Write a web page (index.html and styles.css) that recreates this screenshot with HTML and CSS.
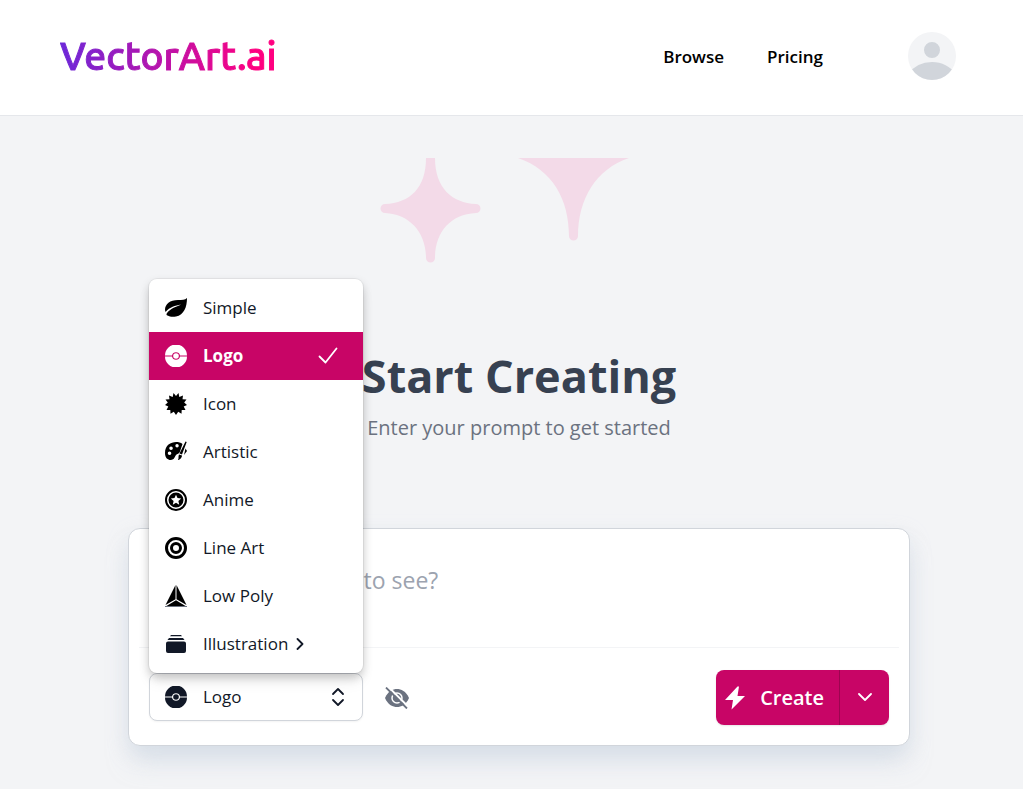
FILE: index.html
```html
<!DOCTYPE html>
<html lang="en">
<head>
    <meta charset="UTF-8">
    <meta name="viewport" content="width=device-width, initial-scale=1.0">
    <title>VectorArt.ai</title>
    <link rel="stylesheet" href="styles.css">
</head>
<body>
    <header class="header">
        <a class="brand" href="#">VectorArt.ai</a>
        <nav class="nav">
            <a href="#">Browse</a>
            <a href="#">Pricing</a>
        </nav>
        <button class="avatar" type="button" aria-label="Account">
            <svg viewBox="0 0 24 24" fill="#d1d5db"><path d="M24 20.993V24H0v-2.996A14.977 14.977 0 0 1 12.004 15c4.904 0 9.26 2.354 11.996 5.993zM16.002 8.999a4 4 0 1 1-8 0 4 4 0 0 1 8 0z"/></svg>
        </button>
    </header>

    <main class="main">
        <svg class="sparkles" viewBox="0 0 278 105" aria-hidden="true">
            <path d="M46 0H55C55 30 72 45 96 46A4.500 4.500 0 0 1 96 55C70 56 55 75 55 100A4.500 4.500 0 0 1 46 100C46 75 30 56 5 55A4.500 4.500 0 0 1 5 46C30 45 46 30 46 0Z"/>
            <path d="M138 0H249C216 11 198 41 198 78A4.500 4.500 0 0 1 189 78C189 42 173 12 138 0Z"/>
        </svg>
        <h1 class="title">Start Creating</h1>
        <p class="subtitle">Enter your prompt to get started</p>

        <form class="card">
            <textarea class="prompt" aria-label="Prompt" placeholder="What do you want to see?"></textarea>
            <div class="toolbar">
                <div class="picker">
                    <svg class="icon picker-icon" viewBox="0 0 22 22"><use href="#logo-icon"/></svg>
                    <select class="picker-select" aria-label="Style">
                        <option>Simple</option>
                        <option selected>Logo</option>
                        <option>Icon</option>
                        <option>Artistic</option>
                        <option>Anime</option>
                        <option>Line Art</option>
                        <option>Low Poly</option>
                        <option>Illustration</option>
                    </select>
                    <svg class="picker-arrows" viewBox="0 0 14 20"><path d="M2 7l5-5 5 5M2 13l5 5 5-5"/></svg>

                    <div class="menu">
                        <button class="menu-item" type="button">
                            <svg class="icon black" viewBox="0 0 22 22"><path d="M22 1c-2 2-5 2-9 2C5 3 0 7 0 13l.5 2C5 10 10 8.500 16 7.500 11 10 6 11 2 16c-1 1.500-.5 2.500.5 2.500C5 20 8 20 11 19.500 19 18 22 10 22 1z"/></svg>
                            Simple
                        </button>
                        <button class="menu-item selected" type="button">
                            <svg class="icon" viewBox="0 0 22 22">
                                <g id="logo-icon"><path d="M0 10.500a11 11 0 0 1 22 0h-7a4.100 4.100 0 0 0-8 0zM0 11.500a11 11 0 0 0 22 0h-7a4.100 4.100 0 0 1-8 0z"/><circle cx="11" cy="11" r="2.800"/></g>
                            </svg>
                            Logo
                            <svg class="check" viewBox="0 0 20 18"><path d="M1.500 9.500l6 6L18.500 1.500"/></svg>
                        </button>
                        <button class="menu-item" type="button">
                            <svg class="icon black" viewBox="0 0 22 22"><path d="M11 3L13.500 0 14.300 3.900 18 2.500 17.500 6.300 21.500 6.500 19.200 9.500 22 12 18.700 13.500 20.500 17 16.700 17 16.500 20.800 13.200 18.700 11 22 8.800 18.700 5.500 20.800 5.300 17 1.500 17 3.300 13.500 0 12 2.800 9.500.5 6.500 4.500 6.300 4 2.500 7.700 3.900 8.500 0z"/></svg>
                            Icon
                        </button>
                        <button class="menu-item" type="button">
                            <svg class="icon black" viewBox="0 0 22 22">
                                <path fill-rule="evenodd" d="M17.500 3C12-1 0 1 0 12c0 5 3 7 5.500 7 4.500 0 4-4 6-5.500 1.500-1 2.500-.5 3.500-3zM4.500 10.500a1.800 1.800 0 1 0 .1 3.600 1.800 1.800 0 0 0-.1-3.600zM6 5.500a1.800 1.800 0 1 0 .1 3.600A1.800 1.800 0 0 0 6 5.500zM12 3a1.700 1.700 0 1 0 .1 3.400A1.700 1.700 0 0 0 12 3z"/>
                                <path d="M20.500.5l1.200.5-4.700 12.500-2.500-1zM14 13.500l3 1c0 2-2 4.500-4 4.500 1-1.500 0-3.500 1-5.500zM20.500 7.500L22 10l-3 4z"/>
                            </svg>
                            Artistic
                        </button>
                        <button class="menu-item" type="button">
                            <svg class="icon black" viewBox="0 0 22 22">
                                <circle cx="11" cy="11" r="10" fill="none" stroke="currentColor" stroke-width="2"/>
                                <path fill-rule="evenodd" d="M11 3.500a7.500 7.500 0 1 0 0 15 7.500 7.500 0 0 0 0-15zm0 2.200l1.500 3.400 3.700.4-2.800 2.500.8 3.700-3.200-1.900-3.200 1.900.8-3.700-2.800-2.500 3.700-.4z"/>
                            </svg>
                            Anime
                        </button>
                        <button class="menu-item" type="button">
                            <svg class="icon black" viewBox="0 0 22 22"><g fill="none" stroke="currentColor" stroke-width="3"><circle cx="11" cy="11" r="9.500"/><circle cx="11" cy="11" r="4.500"/></g></svg>
                            Line Art
                        </button>
                        <button class="menu-item" type="button">
                            <svg class="icon black" viewBox="0 0 22 22"><path d="M10.500 0v14.300L.5 20zM11.500 0v14.300L21.500 20zM11 15.300L20.500 21h-19z"/><path d="M0 21.500h22" stroke="#6b7280"/></svg>
                            Low Poly
                        </button>
                        <button class="menu-item" type="button">
                            <svg class="icon" viewBox="0 0 22 22"><path d="M6 2h10l1 1.300H5zM4 5h14l1.500 2h-17zM3 8.500h16a2 2 0 0 1 2 2V18a2 2 0 0 1-2 2H3a2 2 0 0 1-2-2v-7.500a2 2 0 0 1 2-2z"/></svg>
                            Illustration
                            <svg class="more" viewBox="0 0 8 12"><path d="M1.500 1l5 5-5 5"/></svg>
                        </button>
                    </div>
                </div>

                <button class="visibility" type="button" aria-label="Toggle visibility">
                    <svg viewBox="0 0 24 22">
                        <path d="M0 11C3 4 8 2 12 2s9 2 12 9c-3 7-8 9-12 9S3 18 0 11z" fill="currentColor"/>
                        <circle cx="12" cy="11" r="5" fill="none" stroke="#fff" stroke-width="1.500"/>
                        <path d="M3-.5l21 21" stroke="#fff" stroke-width="2"/>
                        <path d="M1 .5l21 21" stroke="currentColor" stroke-width="1.800"/>
                    </svg>
                </button>

                <div class="create">
                    <button class="create-main" type="submit">
                        <svg viewBox="0 0 20 24"><path d="M12.500.5L0 14h8l-1.500 9.500L20 10h-7.500L14 .5z"/></svg>
                        Create
                    </button>
                    <button class="create-more" type="button" aria-label="More options">
                        <svg viewBox="0 0 14 9"><path d="M1 1l6 6 6-6"/></svg>
                    </button>
                </div>
            </div>
        </form>
    </main>
</body>
</html>
```
FILE: styles.css
```css
* {
    box-sizing: border-box;
}
body {
    margin: 0;
    min-height: 100vh;
    display: flex;
    flex-direction: column;
    background: #f3f4f6;
    color: #111827;
    font-family: "Segoe UI", "Open Sans", "Noto Sans", sans-serif;
    font-size: 17px;
}
button, select, textarea {
    font: inherit;
    color: inherit;
    margin: 0;
    padding: 0;
    border: none;
    background: none;
}
button {
    cursor: pointer;
}
svg {
    display: block;
    flex: none;
}

/* header */
.header {
    display: flex;
    align-items: center;
    padding: 31px 67px 34px 60px;
    background: #fff;
    border-bottom: 1px solid #e5e7eb;
}
.brand {
    margin-right: auto;
    font-family: Ubuntu, "Noto Sans", sans-serif;
    font-size: 39px;
    font-weight: 500;
    line-height: 50px;
    text-decoration: none;
    color: transparent;
    -webkit-text-stroke: 1px transparent;
    background: linear-gradient(to right, #6d28d9, #ff0080 90%);
    background-clip: text;
    -webkit-background-clip: text;
}
.nav {
    display: flex;
    gap: 43px;
    margin-right: 85px;
    padding-top: 2px;
}
.nav a {
    color: #000;
    font-weight: 600;
    line-height: 28px;
    text-decoration: none;
}
.avatar {
    width: 48px;
    height: 48px;
    border-radius: 50%;
    overflow: hidden;
    background: #f3f4f6;
}

/* hero */
.main {
    flex: 1;
    padding: 42px 113px 44px 128px;
    text-align: center;
}
.sparkles {
    width: 278px;
    height: 105px;
    margin: 0 auto 85px;
    fill: #f3dae8;
}
.title {
    margin: 0;
    color: #374151;
    font-size: 45px;
    font-weight: 700;
    line-height: 56px;
}
.subtitle {
    margin: 10px 0 86px;
    color: #6b7280;
    font-size: 20px;
    line-height: 28px;
}

/* prompt card */
.card {
    padding: 10px;
    background: #fff;
    border: 1px solid #d1d5db;
    border-radius: 12px;
    box-shadow: 0 20px 25px -5px #cbd5e180, 0 8px 20px #cbd5e166;
    text-align: left;
}
.prompt {
    display: block;
    width: 100%;
    height: 109px;
    padding: 25px 24px;
    border-bottom: 1px solid #f3f4f6;
    outline: none;
    resize: none;
    font-size: 23px;
    line-height: 32px;
}
.prompt::placeholder {
    color: #9ca3af;
}
.toolbar {
    display: flex;
    align-items: center;
    padding: 22px 10px 10px;
}
.picker {
    position: relative;
    width: 214px;
    margin-bottom: 2px;
}
.picker-select {
    display: block;
    appearance: none;
    width: 100%;
    height: 48px;
    padding: 0 53px;
    border: 1px solid #d1d5db;
    border-radius: 8px;
    box-shadow: 0 1px 2px #0000000d;
    background: #fff;
}
.icon {
    width: 22px;
    height: 22px;
    fill: currentColor;
}
.black {
    color: #000;
}
.picker-icon {
    position: absolute;
    left: 16px;
    top: 13px;
}
.picker-arrows {
    position: absolute;
    right: 18px;
    top: 14px;
    width: 14px;
    height: 20px;
    pointer-events: none;
}
.picker-arrows, .check, .more, .create-more svg {
    fill: none;
    stroke: currentColor;
    stroke-width: 1.8;
    stroke-linecap: round;
    stroke-linejoin: round;
}
.menu {
    position: absolute;
    left: 0;
    bottom: 100%;
    width: 100%;
    padding: 5px 0;
    background: #fff;
    border-radius: 8px;
    box-shadow: 0 0 0 1px #0000000d, 0 10px 15px -3px #0000001a, 0 4px 10px #0000002e;
}
.menu-item {
    display: flex;
    align-items: center;
    width: 100%;
    height: 48px;
    padding: 0 25px 0 16px;
}
.menu-item .icon {
    margin-right: 16px;
}
.menu-item.selected {
    background: #c80566;
    color: #fff;
    font-weight: 700;
}
.check {
    width: 20px;
    height: 18px;
    margin-left: auto;
}
.more {
    width: 8px;
    height: 12px;
    margin-left: 8px;
}
.visibility {
    width: 24px;
    margin: 0 auto 0 22px;
    color: #6b7280;
}
.create {
    display: flex;
    height: 55px;
    border-radius: 8px;
    overflow: hidden;
    background: #c80566;
    color: #fff;
    box-shadow: 0 1px 2px #0000001a;
}
.create-main {
    display: flex;
    align-items: center;
    gap: 15px;
    padding: 0 15px 0 9px;
    font-size: 20px;
    font-weight: 600;
}
.create-main svg {
    width: 20px;
    height: 24px;
    fill: currentColor;
}
.create-more {
    display: flex;
    align-items: center;
    justify-content: center;
    width: 50px;
    border-left: 1px solid #9d0550;
}
.create-more svg {
    width: 14px;
    height: 9px;
}
```
